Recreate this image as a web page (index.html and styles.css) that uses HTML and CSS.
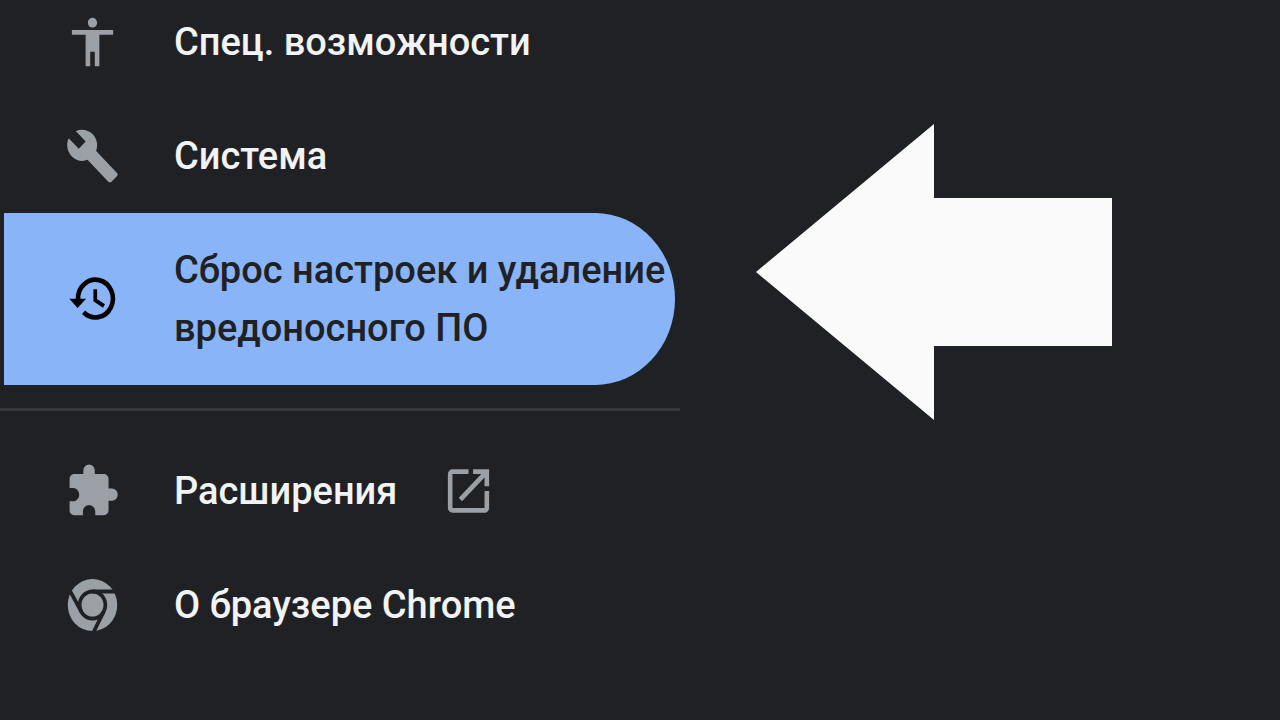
FILE: index.html
```html
<!DOCTYPE html>
<html lang="ru">
<head>
    <meta charset="UTF-8">
    <meta name="viewport" content="width=device-width, initial-scale=1.0">
    <title>Настройки</title>
    <link rel="stylesheet" href="styles.css">
</head>
<body>

<div class="page">
    <nav class="sidebar">
        <a class="item" href="#accessibility">
            <svg class="icon" viewBox="0 0 24 24" preserveAspectRatio="none" aria-hidden="true">
                <path d="M12 2c1.1 0 2 .9 2 2s-.9 2-2 2-2-.9-2-2 .9-2 2-2zm9 7h-6v13h-2v-6h-2v6H9V9H3V7h18v2z"/>
            </svg>
            <span>Спец. возможности</span>
        </a>
        <a class="item" href="#system">
            <svg class="icon" viewBox="0 0 24 24" preserveAspectRatio="none" aria-hidden="true">
                <path d="M22.7 19l-9.1-9.1c.9-2.3.4-5-1.5-6.9-2-2-5-2.4-7.4-1.3L9 6 6 9 1.6 4.7C.4 7.1.9 10.1 2.9 12.1c1.9 1.9 4.6 2.4 6.9 1.5l9.1 9.1c.4.4 1 .4 1.4 0l2.3-2.3c.5-.4.5-1.1.1-1.4z"/>
            </svg>
            <span>Система</span>
        </a>
        <a class="item selected" href="#reset" aria-current="page">
            <svg class="icon" viewBox="0 0 24 24" preserveAspectRatio="none" aria-hidden="true">
                <path d="M1.900 11.900H9.200L5.500 15.700z"/>
                <path class="clock" d="M5.700 12.200A7.600 7.800 0 1 1 8.100 17.500"/>
                <path class="hands" d="M13.200 8V12.500L17 14.900"/>
            </svg>
            <span>Сброс настроек и удаление<br>вредоносного ПО</span>
        </a>
        <hr class="divider">
        <a class="item" href="#extensions">
            <svg class="icon" viewBox="0 0 24 24" preserveAspectRatio="none" aria-hidden="true">
                <path d="M20.5 11H19V7c0-1.1-.9-2-2-2h-4V3.500a2.500 2.500 0 0 0-5 0V5H4c-1.1 0-1.990.9-1.990 2v3.800H3.500c1.490 0 2.700 1.210 2.700 2.700s-1.210 2.700-2.700 2.700H2V20c0 1.1.9 2 2 2h3.800v-1.500c0-1.490 1.210-2.700 2.700-2.700s2.700 1.210 2.700 2.700V22H17c1.1 0 2-.9 2-2v-4h1.500a2.500 2.500 0 0 0 0-5z"/>
            </svg>
            <span>Расширения</span>
            <svg class="icon external" viewBox="0 0 24 24" preserveAspectRatio="none" aria-hidden="true">
                <path d="M19 19H5V5h7V3H5a2 2 0 0 0-2 2v14a2 2 0 0 0 2 2h14c1.1 0 2-.9 2-2v-7h-2v7zM14 3v2h3.590l-9.830 9.830 1.410 1.410L19 6.410V10h2V3h-7z"/>
            </svg>
        </a>
        <a class="item" href="#about">
            <svg class="icon" viewBox="0 0 24 24" preserveAspectRatio="none" aria-hidden="true">
                <circle cx="12" cy="12" r="10.800"/>
                <circle class="ring" cx="12" cy="12" r="5.600"/>
                <path class="ring" d="M12 6.400H22.500M7.150 14.800L2.100 6M16.850 14.800L12.300 23.500"/>
            </svg>
            <span>О браузере Chrome</span>
        </a>
    </nav>
    <main class="content">
        <svg class="pointer" viewBox="0 0 356 296" aria-hidden="true">
            <path d="M0 148L178 0V74H356V222H178V296z"/>
        </svg>
    </main>
</div>

</body>
</html>
```

FILE: styles.css
```css
body {
    font-family: Roboto, "Liberation Sans", sans-serif;
    background-color: #202124;
    margin: 0;
}

.page {
    display: grid;
    grid-template-columns: minmax(0, 680px) 1fr;
    min-height: 100vh;
    overflow: hidden;
}

.sidebar {
    margin-top: -15px;
}

.item {
    display: flex;
    align-items: center;
    box-sizing: border-box;
    min-height: 114px;
    margin: 0 5px 0 4px;
    padding: 28px 0 28px 61px;
    color: #f1f3f4;
    font-size: 38px;
    font-weight: 500;
    line-height: 58px;
    text-decoration: none;
    white-space: nowrap;
}

.item.selected {
    background-color: #8ab4f8;
    border-radius: 0 80px 80px 0 / 0 86px 86px 0;
    color: #202124;
}

.icon {
    flex: none;
    width: 55px;
    height: 58px;
    margin-right: 54px;
    fill: #9aa0a6;
}

.selected .icon {
    fill: #000;
}

.icon.external {
    margin: 0 0 0 44px;
}

.ring {
    fill: none;
    stroke: #202124;
    stroke-width: 1.6px;
}

.clock, .hands {
    fill: none;
    stroke: #000;
    stroke-width: 2px;
}

.hands {
    stroke-width: 1.6px;
}

.divider {
    height: 3px;
    margin: 23px 0;
    border: none;
    background-color: #35363a;
}

.content {
    padding: 124px 168px 0 76px;
}

.pointer {
    display: block;
    width: 100%;
    max-width: 356px;
    fill: #fafafa;
}
```
